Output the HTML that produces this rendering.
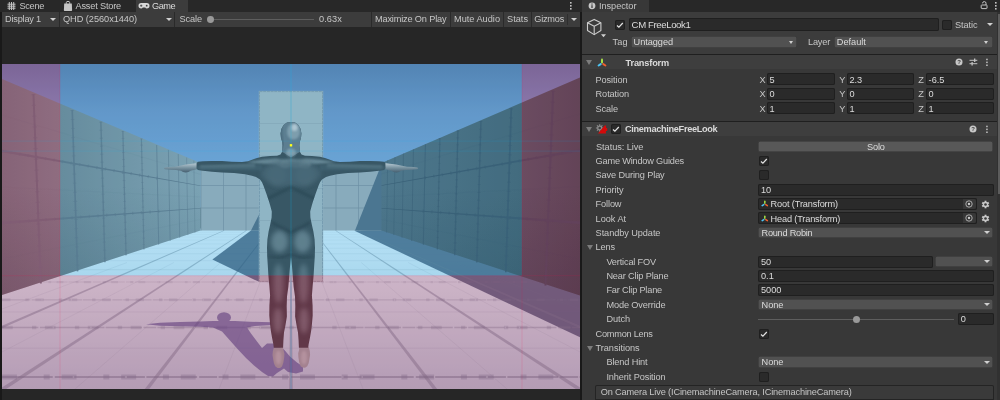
<!DOCTYPE html>
<html><head><meta charset="utf-8"><title>Unity</title>
<style>
html,body{margin:0;padding:0;}
body{width:1000px;height:400px;position:relative;overflow:hidden;background:#383838;font-family:"Liberation Sans",sans-serif;font-size:9.2px;color:#c6c6c6;}
#root{position:absolute;left:0;top:0;width:1000px;height:400px;will-change:transform;}
.a{position:absolute;}
.t{position:absolute;white-space:nowrap;line-height:12px;height:12px;}
.b{font-weight:bold;color:#dadada;}
.w{color:#dcdcdc;}
.f{position:absolute;background:#2a2a2a;border-radius:2px;box-shadow:inset 0 0 0 1px #1f1f1f;height:12px;}
.dd{position:absolute;background:#515151;border-radius:2px;height:11.5px;box-shadow:inset 0 0 0 0.5px #303030;}
.tri{position:absolute;width:0;height:0;border-left:3px solid transparent;border-right:3px solid transparent;border-top:3.5px solid #d0d0d0;}
.fold{position:absolute;width:0;height:0;border-left:3.2px solid transparent;border-right:3.2px solid transparent;border-top:5.4px solid #7c7c7c;}
.sep{position:absolute;top:12px;width:1px;height:15px;background:#2a2a2a;}
.cb{position:absolute;width:10px;height:10px;background:#2a2a2a;border-radius:2px;box-shadow:inset 0 0 0 1px #1f1f1f;}
.hl{position:absolute;left:582px;width:418px;height:1px;background:#1f1f1f;}
</style></head><body>
<div id="root">
<div class="a" style="left:0;top:0;width:582px;height:400px;background:#262626;"></div>
<div class="a" style="left:0;top:0;width:2px;height:400px;background:#191919;"></div>
<div class="a" style="left:580px;top:0;width:2px;height:400px;background:#191919;"></div>
<div class="a" style="left:0;top:0;width:582px;height:12px;background:#282828;"></div>
<div class="a" style="left:136px;top:0;width:52px;height:12px;background:#3c3c3c;"></div>
<div class="a" style="left:2px;top:12px;width:578px;height:14.5px;background:#3c3c3c;"></div>
<div class="a" style="left:582px;top:0;width:418px;height:12px;background:#282828;"></div>
<div class="a" style="left:582px;top:0;width:67px;height:12px;background:#383838;"></div>
<!--GAME-->
<svg class="a" style="left:2px;top:63.500px" width="578" height="325.500" viewBox="2 63.500 578 325.500">
<defs>
<linearGradient id="sky" x1="0" y1="0" x2="0" y2="1"><stop offset="0" stop-color="#6379a6"/><stop offset="0.450" stop-color="#7590bf"/><stop offset="1" stop-color="#7f9fce"/></linearGradient>
<clipPath id="cl"><rect x="2" y="63.500" width="578" height="325.500"/></clipPath>
<filter id="bl1" x="-20%" y="-20%" width="140%" height="140%"><feGaussianBlur stdDeviation="1.200"/></filter>
<filter id="bl2" x="-20%" y="-20%" width="140%" height="140%"><feGaussianBlur stdDeviation="2.500"/></filter>
<filter id="bl0" x="-20%" y="-20%" width="140%" height="140%"><feGaussianBlur stdDeviation="0.600"/></filter>
<linearGradient id="flr" gradientUnits="userSpaceOnUse" x1="0" y1="230" x2="0" y2="389"><stop offset="0" stop-color="#d6e6f3"/><stop offset="0.190" stop-color="#d1e1ef"/><stop offset="0.282" stop-color="#c9dceb"/><stop offset="0.286" stop-color="#c4d8e0"/><stop offset="1" stop-color="#a6bac9"/></linearGradient>
<linearGradient id="lwg" gradientUnits="userSpaceOnUse" x1="2" y1="0" x2="200" y2="0"><stop offset="0" stop-color="#6f7780"/><stop offset="0.320" stop-color="#7b838c"/><stop offset="1" stop-color="#939da6"/></linearGradient>
<linearGradient id="rwg" gradientUnits="userSpaceOnUse" x1="580" y1="0" x2="382" y2="0"><stop offset="0" stop-color="#46515a"/><stop offset="0.320" stop-color="#505c67"/><stop offset="1" stop-color="#5d6a77"/></linearGradient>
<linearGradient id="wdk" gradientUnits="userSpaceOnUse" x1="0" y1="185" x2="0" y2="295"><stop offset="0" stop-color="#0a1420" stop-opacity="0"/><stop offset="1" stop-color="#0a1420" stop-opacity="0.160"/></linearGradient>
</defs>
<g clip-path="url(#cl)">
<rect x="2" y="63.500" width="578" height="104" fill="url(#sky)"/>
<rect x="2" y="167" width="578" height="40" fill="#7f9fce"/>
<rect x="2" y="228" width="578" height="162" fill="url(#flr)"/>
<polygon points="354,230 381,229 382,229 580,293.500 580,336.800" fill="#314664" fill-opacity="0.730"/>
<line x1="2" x2="580" y1="376.50" y2="376.50" stroke="#687a8e" stroke-width="2.24" stroke-opacity="0.50" stroke-dasharray="50.7 2.1 17.9 1.5"/>
<line x1="2" x2="580" y1="376.50" y2="376.50" stroke="#687a8e" stroke-width="5.07" stroke-opacity="0.35" stroke-dasharray="14.9 26.8 6.0 11.9"/>
<line x1="2" x2="580" y1="419.41" y2="419.41" stroke="#687a8e" stroke-width="0.600" stroke-opacity="0.200"/>
<line x1="2" x2="580" y1="327.00" y2="327.00" stroke="#687a8e" stroke-width="1.61" stroke-opacity="0.36" stroke-dasharray="36.4 1.5 12.8 1.1"/>
<line x1="2" x2="580" y1="327.00" y2="327.00" stroke="#687a8e" stroke-width="3.64" stroke-opacity="0.25" stroke-dasharray="10.7 19.3 4.3 8.6"/>
<line x1="2" x2="580" y1="347.68" y2="347.68" stroke="#687a8e" stroke-width="0.600" stroke-opacity="0.200"/>
<line x1="2" x2="580" y1="299.28" y2="299.28" stroke="#687a8e" stroke-width="1.25" stroke-opacity="0.25" stroke-dasharray="28.4 1.2 10.0 0.8"/>
<line x1="2" x2="580" y1="299.28" y2="299.28" stroke="#687a8e" stroke-width="2.84" stroke-opacity="0.18" stroke-dasharray="8.4 15.0 3.3 6.7"/>
<line x1="2" x2="580" y1="311.42" y2="311.42" stroke="#687a8e" stroke-width="0.600" stroke-opacity="0.200"/>
<line x1="2" x2="580" y1="281.55" y2="281.55" stroke="#687a8e" stroke-width="1.03" stroke-opacity="0.19" stroke-dasharray="23.3 1.0 8.2 0.7"/>
<line x1="2" x2="580" y1="281.55" y2="281.55" stroke="#687a8e" stroke-width="2.33" stroke-opacity="0.14" stroke-dasharray="6.8 12.3 2.7 5.5"/>
<line x1="2" x2="580" y1="269.25" y2="269.25" stroke="#687a8e" stroke-width="0.87" stroke-opacity="0.16"/>
<line x1="2" x2="580" y1="260.20" y2="260.20" stroke="#687a8e" stroke-width="0.75" stroke-opacity="0.14"/>
<line x1="2" x2="580" y1="253.27" y2="253.27" stroke="#687a8e" stroke-width="0.67" stroke-opacity="0.13"/>
<line x1="2" x2="580" y1="247.80" y2="247.80" stroke="#687a8e" stroke-width="0.60" stroke-opacity="0.12"/>
<line x1="2" x2="580" y1="243.36" y2="243.36" stroke="#687a8e" stroke-width="0.54" stroke-opacity="0.11"/>
<line x1="2" x2="580" y1="239.69" y2="239.69" stroke="#687a8e" stroke-width="0.49" stroke-opacity="0.11"/>
<line x1="2" x2="580" y1="236.61" y2="236.61" stroke="#687a8e" stroke-width="0.45" stroke-opacity="0.10"/>
<line x1="2" x2="580" y1="233.98" y2="233.98" stroke="#687a8e" stroke-width="0.42" stroke-opacity="0.10"/>
<line x1="2" x2="580" y1="231.71" y2="231.71" stroke="#687a8e" stroke-width="0.39" stroke-opacity="0.10"/>
<line x1="2" x2="580" y1="229.73" y2="229.73" stroke="#687a8e" stroke-width="0.37" stroke-opacity="0.09"/>
<polygon points="223.56,230.00 224.81,230.00 -144.54,392.00 -153.58,392.00" fill="#687a8e" fill-opacity="0.460"/>
<polygon points="246.00,230.00 246.91,230.00 0.92,392.00 -5.68,392.00" fill="#687a8e" fill-opacity="0.460"/>
<polygon points="268.41,230.00 269.04,230.00 146.58,392.00 142.04,392.00" fill="#687a8e" fill-opacity="0.460"/>
<polygon points="290.75,230.00 291.25,230.00 292.80,392.00 289.20,392.00" fill="#687a8e" fill-opacity="0.460"/>
<polygon points="312.96,230.00 313.59,230.00 439.96,392.00 435.42,392.00" fill="#687a8e" fill-opacity="0.460"/>
<polygon points="335.09,230.00 336.00,230.00 587.68,392.00 581.08,392.00" fill="#687a8e" fill-opacity="0.460"/>
<polygon points="357.19,230.00 358.44,230.00 735.58,392.00 726.54,392.00" fill="#687a8e" fill-opacity="0.460"/>
<line x1="127.03" y1="262" x2="-222.41" y2="392" stroke="#687a8e" stroke-width="0.600" stroke-opacity="0.180"/>
<line x1="173.88" y1="262" x2="-75.72" y2="392" stroke="#687a8e" stroke-width="0.600" stroke-opacity="0.180"/>
<line x1="220.73" y1="262" x2="70.97" y2="392" stroke="#687a8e" stroke-width="0.600" stroke-opacity="0.180"/>
<line x1="267.58" y1="262" x2="217.66" y2="392" stroke="#687a8e" stroke-width="0.600" stroke-opacity="0.180"/>
<line x1="314.42" y1="262" x2="364.34" y2="392" stroke="#687a8e" stroke-width="0.600" stroke-opacity="0.180"/>
<line x1="361.27" y1="262" x2="511.03" y2="392" stroke="#687a8e" stroke-width="0.600" stroke-opacity="0.180"/>
<line x1="408.12" y1="262" x2="657.72" y2="392" stroke="#687a8e" stroke-width="0.600" stroke-opacity="0.180"/>
<line x1="454.97" y1="262" x2="804.41" y2="392" stroke="#687a8e" stroke-width="0.600" stroke-opacity="0.180"/>
<rect x="200.500" y="162.500" width="181" height="67.500" fill="#a3a7b0"/>
<line x1="201.00" x2="201.00" y1="162.500" y2="230" stroke="#838894" stroke-width="0.700"/>
<line x1="223.50" x2="223.50" y1="162.500" y2="230" stroke="#838894" stroke-width="0.700"/>
<line x1="246.00" x2="246.00" y1="162.500" y2="230" stroke="#838894" stroke-width="0.700"/>
<line x1="268.50" x2="268.50" y1="162.500" y2="230" stroke="#838894" stroke-width="0.700"/>
<line x1="291.00" x2="291.00" y1="162.500" y2="230" stroke="#838894" stroke-width="0.700"/>
<line x1="313.50" x2="313.50" y1="162.500" y2="230" stroke="#838894" stroke-width="0.700"/>
<line x1="336.00" x2="336.00" y1="162.500" y2="230" stroke="#838894" stroke-width="0.700"/>
<line x1="358.50" x2="358.50" y1="162.500" y2="230" stroke="#838894" stroke-width="0.700"/>
<line x1="381.00" x2="381.00" y1="162.500" y2="230" stroke="#838894" stroke-width="0.700"/>
<line x1="200.500" x2="381.500" y1="185.00" y2="185.00" stroke="#838894" stroke-width="0.700"/>
<line x1="200.500" x2="381.500" y1="207.50" y2="207.50" stroke="#838894" stroke-width="0.700"/>
<polygon points="382,162.500 382,230 355,230" fill="#5a687c"/>
<polygon points="2,78.500 200.500,162.500 200.500,230 2,294.500" fill="url(#lwg)"/>
<polygon points="580,77 381.500,162.500 381.500,230 580,295" fill="url(#rwg)"/>
<polygon points="2,185 200.500,185 200.500,230 2,294.500" fill="url(#wdk)"/>
<polygon points="580,185 381.500,185 381.500,230 580,295" fill="url(#wdk)"/>
<line x1="-22.04" x2="-11.19" y1="70.80" y2="300.38" stroke="#696f7d" stroke-width="2.34" stroke-opacity="1.00"/>
<line x1="-22.04" x2="-11.19" y1="70.80" y2="300.38" stroke="#696f7d" stroke-width="5.14" stroke-opacity="0.550" stroke-dasharray="1.3 11.7"/>
<line x1="33.44" x2="40.84" y1="93.51" y2="283.05" stroke="#696f7d" stroke-width="1.93" stroke-opacity="1.00"/>
<line x1="33.44" x2="40.84" y1="93.51" y2="283.05" stroke="#696f7d" stroke-width="4.25" stroke-opacity="0.550" stroke-dasharray="1.1 9.7"/>
<line x1="72.22" x2="77.58" y1="109.47" y2="270.86" stroke="#696f7d" stroke-width="1.64" stroke-opacity="0.90"/>
<line x1="72.22" x2="77.58" y1="109.47" y2="270.86" stroke="#696f7d" stroke-width="3.62" stroke-opacity="0.550" stroke-dasharray="0.9 8.2"/>
<line x1="100.85" x2="104.91" y1="121.30" y2="261.83" stroke="#696f7d" stroke-width="1.43" stroke-opacity="0.82"/>
<line x1="100.85" x2="104.91" y1="121.30" y2="261.83" stroke="#696f7d" stroke-width="3.15" stroke-opacity="0.550" stroke-dasharray="0.8 7.2"/>
<line x1="122.85" x2="126.04" y1="130.43" y2="254.86" stroke="#696f7d" stroke-width="1.27" stroke-opacity="0.76"/>
<line x1="122.85" x2="126.04" y1="130.43" y2="254.86" stroke="#696f7d" stroke-width="2.79" stroke-opacity="0.550" stroke-dasharray="0.7 6.3"/>
<line x1="141.40" x2="143.93" y1="138.14" y2="248.98" stroke="#696f7d" stroke-width="1.13" stroke-opacity="0.71"/>
<line x1="141.40" x2="143.93" y1="138.14" y2="248.98" stroke="#696f7d" stroke-width="2.48" stroke-opacity="0.550" stroke-dasharray="0.6 5.6"/>
<line x1="156.67" x2="158.71" y1="144.50" y2="244.13" stroke="#696f7d" stroke-width="1.01" stroke-opacity="0.67"/>
<line x1="168.40" x2="170.10" y1="149.39" y2="240.39" stroke="#696f7d" stroke-width="0.93" stroke-opacity="0.64"/>
<line x1="178.25" x2="179.69" y1="153.51" y2="237.25" stroke="#696f7d" stroke-width="0.85" stroke-opacity="0.61"/>
<line x1="186.63" x2="187.87" y1="157.02" y2="234.57" stroke="#696f7d" stroke-width="0.79" stroke-opacity="0.59"/>
<line x1="193.85" x2="194.93" y1="160.04" y2="232.26" stroke="#696f7d" stroke-width="0.74" stroke-opacity="0.57"/>
<polygon points="2.00,149.25 2.00,151.75 200.50,185.49 200.50,184.89" fill="#696f7d"/>
<line x1="2.00" y1="150.50" x2="160.95" y2="178.28" stroke="#696f7d" stroke-width="3.200" stroke-opacity="0.500" stroke-dasharray="1.200 7.500"/>
<polygon points="2.00,221.25 2.00,223.75 200.50,208.03 200.50,207.43" fill="#696f7d"/>
<line x1="2.00" y1="222.50" x2="160.95" y2="210.68" stroke="#696f7d" stroke-width="3.200" stroke-opacity="0.500" stroke-dasharray="1.200 7.500"/>
<line x1="2.00" y1="114.50" x2="200.50" y2="173.91" stroke="#696f7d" stroke-width="0.500" stroke-opacity="0.180"/>
<line x1="2.00" y1="186.50" x2="200.50" y2="196.46" stroke="#696f7d" stroke-width="0.500" stroke-opacity="0.180"/>
<line x1="2.00" y1="258.50" x2="200.50" y2="219.01" stroke="#696f7d" stroke-width="0.500" stroke-opacity="0.180"/>
<line x1="614.70" x2="603.01" y1="64.84" y2="304.22" stroke="#454f5f" stroke-width="2.42" stroke-opacity="1.00"/>
<line x1="614.70" x2="603.01" y1="64.84" y2="304.22" stroke="#454f5f" stroke-width="5.31" stroke-opacity="0.550" stroke-dasharray="1.3 12.1"/>
<line x1="553.16" x2="545.43" y1="90.30" y2="284.92" stroke="#454f5f" stroke-width="1.96" stroke-opacity="1.00"/>
<line x1="553.16" x2="545.43" y1="90.30" y2="284.92" stroke="#454f5f" stroke-width="4.32" stroke-opacity="0.550" stroke-dasharray="1.1 9.8"/>
<line x1="511.27" x2="505.79" y1="107.74" y2="271.70" stroke="#454f5f" stroke-width="1.65" stroke-opacity="0.90"/>
<line x1="511.27" x2="505.79" y1="107.74" y2="271.70" stroke="#454f5f" stroke-width="3.64" stroke-opacity="0.550" stroke-dasharray="0.9 8.3"/>
<line x1="480.93" x2="476.84" y1="120.43" y2="262.07" stroke="#454f5f" stroke-width="1.43" stroke-opacity="0.82"/>
<line x1="480.93" x2="476.84" y1="120.43" y2="262.07" stroke="#454f5f" stroke-width="3.14" stroke-opacity="0.550" stroke-dasharray="0.8 7.1"/>
<line x1="457.93" x2="454.76" y1="130.08" y2="254.76" stroke="#454f5f" stroke-width="1.26" stroke-opacity="0.76"/>
<line x1="457.93" x2="454.76" y1="130.08" y2="254.76" stroke="#454f5f" stroke-width="2.77" stroke-opacity="0.550" stroke-dasharray="0.7 6.3"/>
<line x1="439.90" x2="437.37" y1="137.67" y2="249.01" stroke="#454f5f" stroke-width="1.12" stroke-opacity="0.71"/>
<line x1="439.90" x2="437.37" y1="137.67" y2="249.01" stroke="#454f5f" stroke-width="2.47" stroke-opacity="0.550" stroke-dasharray="0.6 5.6"/>
<line x1="425.38" x2="423.32" y1="143.79" y2="244.37" stroke="#454f5f" stroke-width="1.01" stroke-opacity="0.67"/>
<line x1="413.45" x2="411.73" y1="148.83" y2="240.55" stroke="#454f5f" stroke-width="0.93" stroke-opacity="0.64"/>
<line x1="403.46" x2="402.01" y1="153.06" y2="237.34" stroke="#454f5f" stroke-width="0.85" stroke-opacity="0.61"/>
<line x1="394.98" x2="393.74" y1="156.65" y2="234.62" stroke="#454f5f" stroke-width="0.79" stroke-opacity="0.59"/>
<line x1="387.68" x2="386.61" y1="159.74" y2="232.28" stroke="#454f5f" stroke-width="0.73" stroke-opacity="0.57"/>
<polygon points="580.00,148.42 580.00,150.92 381.50,185.23 381.50,184.63" fill="#454f5f"/>
<line x1="580.00" y1="149.67" x2="421.05" y2="177.90" stroke="#454f5f" stroke-width="3.200" stroke-opacity="0.500" stroke-dasharray="1.200 7.500"/>
<polygon points="580.00,221.08 580.00,223.58 381.50,207.98 381.50,207.38" fill="#454f5f"/>
<line x1="580.00" y1="222.33" x2="421.05" y2="210.60" stroke="#454f5f" stroke-width="3.200" stroke-opacity="0.500" stroke-dasharray="1.200 7.500"/>
<line x1="580.00" y1="113.33" x2="381.50" y2="173.55" stroke="#454f5f" stroke-width="0.500" stroke-opacity="0.180"/>
<line x1="580.00" y1="186.00" x2="381.50" y2="196.30" stroke="#454f5f" stroke-width="0.500" stroke-opacity="0.180"/>
<line x1="580.00" y1="258.67" x2="381.50" y2="219.06" stroke="#454f5f" stroke-width="0.500" stroke-opacity="0.180"/>
<polygon points="259.600,230 251,230 212.400,259 259.600,281.600" fill="#314664" fill-opacity="0.730"/>
<polygon points="259.600,230 259.600,213 251,230" fill="#5a687c"/>
<rect x="258.800" y="90.400" width="64.400" height="191.200" fill="#abb3ba"/>
<rect x="259.500" y="91.100" width="63" height="189.800" fill="none" stroke="#858e9c" stroke-width="0.800" stroke-dasharray="3 0.700"/>
<line x1="259" x2="323.300" y1="123" y2="123" stroke="#858e9c" stroke-width="0.500" stroke-opacity="0.600"/>
<line x1="259" x2="323.300" y1="155.5" y2="155.5" stroke="#858e9c" stroke-width="0.500" stroke-opacity="0.600"/>
<line x1="259" x2="323.300" y1="188" y2="188" stroke="#858e9c" stroke-width="0.500" stroke-opacity="0.600"/>
<line x1="259" x2="323.300" y1="220" y2="220" stroke="#858e9c" stroke-width="0.500" stroke-opacity="0.600"/>
<line x1="259" x2="323.300" y1="252" y2="252" stroke="#858e9c" stroke-width="0.500" stroke-opacity="0.600"/>
<line x1="291" x2="291" y1="90.500" y2="281" stroke="#858e9c" stroke-width="0.500" stroke-opacity="0.600"/>
<g fill="#48508a" filter="url(#bl0)" opacity="0.640">
<ellipse cx="224" cy="317" rx="7" ry="5.200"/>
<path d="M146 323.800 L160 322.200 L180 321.400 L200 320.900 L213 320.500 L235 320.600 L250 321.300 L272 321.800 L272 324.600 L255 325.500 L247 327 L251 333 L257 341 L262 347.500 L267 343 L274 343 L284 349 L290 356 L297 362 L303 366 L303 371 L296 373 L288 371.500 L284 368 L277 372.500 L273 376 L268 375.500 L262 371.500 L254 365 L246 357.500 L238 349 L230 340 L222 331 L213 327 L200 326.300 L180 325.800 L160 325.200Z"/>
</g>
<g id="char">
<linearGradient id="hg" gradientUnits="userSpaceOnUse" x1="0" y1="163.500" x2="0" y2="172"><stop offset="0" stop-color="#cdc0c0"/><stop offset="0.450" stop-color="#8f898e"/><stop offset="1" stop-color="#534d55"/></linearGradient>
<path d="M198.0 162.4 L197.0 162.6 L192.0 163.2 L186.0 164.0 L180.0 165.2 L175.0 166.2 L168.0 166.4 L164.6 166.9 L163.8 167.8 L164.8 168.8 L170.0 169.2 L176.0 169.4 L181.0 170.2 L183.0 171.4 L185.5 172.0 L188.5 171.6 L190.5 170.2 L197.0 168.8 L198.0 168.5Z" fill="url(#hg)"/>
<path d="M384.0 162.4 L385.0 162.6 L390.0 163.2 L396.0 164.0 L402.0 165.2 L407.0 166.2 L414.0 166.4 L417.4 166.9 L418.2 167.8 L417.2 168.8 L412.0 169.2 L406.0 169.4 L401.0 170.2 L399.0 171.4 L396.5 172.0 L393.5 171.6 L391.5 170.2 L385.0 168.8 L384.0 168.5Z" fill="url(#hg)"/>
<path d="M273.8 347.0 L272.8 351.0 L272.5 354.5 L273.2 359.0 L274.0 363.0 L275.4 366.0 L277.6 367.5 L280.0 367.4 L282.0 366.0 L283.4 362.0 L284.2 357.0 L284.4 353.0 L283.6 350.0 L283.1 347.0Z" fill="#929a9c"/>
<ellipse cx="278.5" cy="357" rx="3" ry="7" fill="#a6adae" filter="url(#bl1)"/>
<path d="M308.8 346.7 L309.8 350.7 L310.1 354.2 L309.4 358.7 L308.6 362.7 L307.2 365.7 L305.0 367.2 L302.6 367.1 L300.6 365.7 L299.2 361.7 L298.4 356.7 L298.2 352.7 L299.0 349.7 L299.5 346.7Z" fill="#929a9c"/>
<ellipse cx="304" cy="357" rx="3" ry="7" fill="#a6adae" filter="url(#bl1)"/>
<path d="M291.0 121.4 L287.0 122.0 L283.6 124.5 L281.4 128.5 L280.6 133.0 L281.0 137.5 L282.3 141.5 L282.6 145.0 L282.2 148.5 L282.0 151.5 L280.5 154.0 L277.0 155.2 L270.0 155.5 L262.0 156.2 L257.0 157.5 L252.0 159.3 L248.0 160.8 L242.0 161.5 L232.0 161.2 L222.0 160.4 L212.0 160.4 L203.0 160.8 L198.0 161.3 L196.6 162.5 L196.6 168.0 L198.0 169.4 L203.0 170.2 L212.0 171.2 L222.0 172.0 L234.0 172.5 L245.0 173.8 L252.0 175.3 L256.0 176.4 L260.0 179.0 L262.0 181.8 L263.4 185.0 L266.3 193.0 L268.4 199.0 L270.2 205.0 L271.8 211.0 L271.6 217.0 L270.2 224.0 L268.6 231.0 L267.4 239.0 L267.0 247.0 L267.2 256.0 L267.8 265.0 L268.4 275.0 L269.3 285.0 L270.1 295.0 L269.4 305.0 L269.3 315.0 L270.2 325.0 L270.8 330.0 L272.0 337.0 L273.4 344.0 L273.8 347.2 L283.1 347.2 L283.4 340.0 L284.0 332.0 L285.4 325.0 L286.9 316.0 L286.7 306.0 L287.0 296.0 L288.4 286.0 L289.2 276.0 L290.0 266.0 L291.0 256.5 L291.0 256.5 L292.0 266.0 L292.8 276.0 L293.6 286.0 L295.0 296.0 L295.3 306.0 L295.1 316.0 L296.6 325.0 L298.0 332.0 L298.6 340.0 L298.9 347.2 L308.2 347.2 L308.6 344.0 L310.0 337.0 L311.2 330.0 L311.8 325.0 L312.7 315.0 L312.6 305.0 L311.9 295.0 L312.7 285.0 L313.6 275.0 L314.2 265.0 L314.8 256.0 L315.0 247.0 L314.6 239.0 L313.4 231.0 L311.8 224.0 L310.4 217.0 L310.2 211.0 L311.8 205.0 L313.6 199.0 L315.7 193.0 L318.6 185.0 L320.0 181.8 L322.0 179.0 L326.0 176.4 L330.0 175.3 L337.0 173.8 L348.0 172.5 L360.0 172.0 L370.0 171.2 L379.0 170.2 L384.0 169.4 L385.4 168.0 L385.4 162.5 L384.0 161.3 L379.0 160.8 L370.0 160.4 L360.0 160.4 L350.0 161.2 L340.0 161.5 L334.0 160.8 L330.0 159.3 L325.0 157.5 L320.0 156.2 L312.0 155.5 L305.0 155.2 L301.5 154.0 L300.0 151.5 L299.8 148.5 L299.4 145.0 L299.7 141.5 L301.0 137.5 L301.4 133.0 L300.6 128.5 L298.4 124.5 L295.0 122.0 L291.0 121.4Z" fill="#434348"/>
<clipPath id="cc"><path d="M291.0 121.4 L287.0 122.0 L283.6 124.5 L281.4 128.5 L280.6 133.0 L281.0 137.5 L282.3 141.5 L282.6 145.0 L282.2 148.5 L282.0 151.5 L280.5 154.0 L277.0 155.2 L270.0 155.5 L262.0 156.2 L257.0 157.5 L252.0 159.3 L248.0 160.8 L242.0 161.5 L232.0 161.2 L222.0 160.4 L212.0 160.4 L203.0 160.8 L198.0 161.3 L196.6 162.5 L196.6 168.0 L198.0 169.4 L203.0 170.2 L212.0 171.2 L222.0 172.0 L234.0 172.5 L245.0 173.8 L252.0 175.3 L256.0 176.4 L260.0 179.0 L262.0 181.8 L263.4 185.0 L266.3 193.0 L268.4 199.0 L270.2 205.0 L271.8 211.0 L271.6 217.0 L270.2 224.0 L268.6 231.0 L267.4 239.0 L267.0 247.0 L267.2 256.0 L267.8 265.0 L268.4 275.0 L269.3 285.0 L270.1 295.0 L269.4 305.0 L269.3 315.0 L270.2 325.0 L270.8 330.0 L272.0 337.0 L273.4 344.0 L273.8 347.2 L283.1 347.2 L283.4 340.0 L284.0 332.0 L285.4 325.0 L286.9 316.0 L286.7 306.0 L287.0 296.0 L288.4 286.0 L289.2 276.0 L290.0 266.0 L291.0 256.5 L291.0 256.5 L292.0 266.0 L292.8 276.0 L293.6 286.0 L295.0 296.0 L295.3 306.0 L295.1 316.0 L296.6 325.0 L298.0 332.0 L298.6 340.0 L298.9 347.2 L308.2 347.2 L308.6 344.0 L310.0 337.0 L311.2 330.0 L311.8 325.0 L312.7 315.0 L312.6 305.0 L311.9 295.0 L312.7 285.0 L313.6 275.0 L314.2 265.0 L314.8 256.0 L315.0 247.0 L314.6 239.0 L313.4 231.0 L311.8 224.0 L310.4 217.0 L310.2 211.0 L311.8 205.0 L313.6 199.0 L315.7 193.0 L318.6 185.0 L320.0 181.8 L322.0 179.0 L326.0 176.4 L330.0 175.3 L337.0 173.8 L348.0 172.5 L360.0 172.0 L370.0 171.2 L379.0 170.2 L384.0 169.4 L385.4 168.0 L385.4 162.5 L384.0 161.3 L379.0 160.8 L370.0 160.4 L360.0 160.4 L350.0 161.2 L340.0 161.5 L334.0 160.8 L330.0 159.3 L325.0 157.5 L320.0 156.2 L312.0 155.5 L305.0 155.2 L301.5 154.0 L300.0 151.5 L299.8 148.5 L299.4 145.0 L299.7 141.5 L301.0 137.5 L301.4 133.0 L300.6 128.5 L298.4 124.5 L295.0 122.0 L291.0 121.4Z"/></clipPath>
<g clip-path="url(#cc)">
<path d="M291 120 L279 120 L279 150 Q284 152 291 157 Q298 152 303 150 L303 120Z" fill="#6e727c"/>
<ellipse cx="293.500" cy="131" rx="6.500" ry="8" fill="#989aa1" filter="url(#bl1)" opacity="0.950"/>
<ellipse cx="294.500" cy="127" rx="3" ry="3.500" fill="#d2cacc" filter="url(#bl1)" opacity="0.950"/>
<path d="M281 124 Q279.500 134 283 146" stroke="#4f505a" stroke-width="2.400" fill="none" filter="url(#bl1)" opacity="0.800"/>
<ellipse cx="291" cy="152" rx="5" ry="4" fill="#9d9da3" filter="url(#bl1)" opacity="0.900"/>
<path d="M246 162 Q262 158.500 276 158 Q284 160 291 158 Q298 160 306 158 Q320 158.500 336 162 Q320 163.500 306 164 Q298 170 291 166 Q284 170 276 164 Q262 163.500 246 162Z" fill="#85898e" filter="url(#bl1)" opacity="0.850"/>
<path d="M200 165 L255 163.500 L255 167 L200 168Z" fill="#85898e" filter="url(#bl1)" opacity="0.600"/>
<path d="M382 165 L327 163.500 L327 167 L382 168Z" fill="#85898e" filter="url(#bl1)" opacity="0.600"/>
<ellipse cx="277" cy="175" rx="9" ry="10" fill="#85898e" filter="url(#bl2)" opacity="0.320"/>
<ellipse cx="305" cy="175" rx="9" ry="10" fill="#85898e" filter="url(#bl2)" opacity="0.320"/>
<ellipse cx="285" cy="164" rx="5" ry="3.500" fill="#989a9c" filter="url(#bl1)" opacity="0.800"/>
<ellipse cx="305" cy="164.500" rx="6" ry="3.500" fill="#919297" filter="url(#bl1)" opacity="0.700"/>
<ellipse cx="291" cy="173" rx="30" ry="13" fill="#56595f" filter="url(#bl2)" opacity="0.800"/>
<path d="M196 166 L262 164 L262 170 L196 169Z" fill="#53575d" filter="url(#bl1)" opacity="0.600"/>
<path d="M386 166 L320 164 L320 170 L386 169Z" fill="#53575d" filter="url(#bl1)" opacity="0.600"/>
<ellipse cx="279.500" cy="241" rx="8.500" ry="11" fill="#85898e" filter="url(#bl2)" opacity="0.700"/>
<ellipse cx="302.500" cy="241" rx="8.500" ry="11" fill="#85898e" filter="url(#bl2)" opacity="0.700"/>
<ellipse cx="278.500" cy="283" rx="5" ry="20" fill="#85898e" filter="url(#bl2)" opacity="0.550"/>
<ellipse cx="303.500" cy="283" rx="5" ry="20" fill="#85898e" filter="url(#bl2)" opacity="0.550"/>
<ellipse cx="278" cy="320" rx="4.500" ry="13" fill="#85898e" filter="url(#bl2)" opacity="0.600"/>
<ellipse cx="304" cy="320" rx="4.500" ry="13" fill="#85898e" filter="url(#bl2)" opacity="0.600"/>
<path d="M266 199 L291 186.500 L316 199 M272 222 L291 232 L310 222" stroke="#322e33" stroke-width="2.600" fill="none" filter="url(#bl1)" opacity="0.600"/>
<path d="M291 158 V230" stroke="#322e33" stroke-width="1.200" filter="url(#bl0)" opacity="0.500"/>
<path d="M269 256 Q280 259 291 254 Q302 259 313 256" stroke="#322e33" stroke-width="1.800" fill="none" filter="url(#bl1)" opacity="0.700"/>
</g>
</g>
</g>
<rect x="60" y="63.500" width="462" height="211.700" fill="rgb(0,194,255)" fill-opacity="0.16"/>
<rect x="2" y="63.500" width="58" height="325.500" fill="rgb(255,0,72)" fill-opacity="0.16"/>
<rect x="522" y="63.500" width="58" height="325.500" fill="rgb(255,0,72)" fill-opacity="0.16"/>
<rect x="60" y="275.200" width="462" height="113.800" fill="rgb(255,0,72)" fill-opacity="0.16"/>
<g stroke-width="0.800" fill="none">
<path d="M60 63.500V389M522 63.500V389M2 275.200H580" stroke="rgb(255,0,72)" stroke-opacity="0.160"/>
<path d="M2 140.600H580M2 150.600H580" stroke="rgb(0,194,255)" stroke-opacity="0.160"/><path d="M291 63.500V389" stroke="rgb(0,194,255)" stroke-opacity="0.300"/>
</g>
<rect x="289.800" y="143.600" width="2.400" height="2.400" fill="#fffe19"/>
</svg>
<svg class="a" style="left:7px;top:1px" width="10" height="10" viewBox="0 0 10 10"><g stroke="#c4c4c4" stroke-width="1" fill="none"><path d="M0.5 3.2H8.5M0.5 5.2H8.5M0.5 7.2H8.5M2.3 1V9M4.5 1V9M6.7 1V9"/></g></svg>
<svg class="a" style="left:63px;top:0px" width="10" height="12" viewBox="0 0 10 12"><path d="M1.2 3.6h7.6l0.3 6.6q0 .7-.7.7H1.6q-.7 0-.7-.7z" fill="#c4c4c4"/><path d="M3.3 3.8V2.6q0-1.2 1.7-1.2t1.7 1.2v1.2" stroke="#c4c4c4" stroke-width="1" fill="none"/></svg>
<svg class="a" style="left:138px;top:2px" width="12" height="8" viewBox="0 0 12 8"><path d="M3.2 1h5.6a2.7 2.7 0 0 1 0 5.4q-1 0-1.6-.9H4.8q-.6.9-1.6.9a2.7 2.7 0 0 1 0-5.4z" fill="#d8d8d8"/><circle cx="8.7" cy="3.7" r="0.9" fill="#3c3c3c"/><path d="M2.1 3.700h2.200M3.200 2.600v2.200" stroke="#3c3c3c" stroke-width="0.8"/></svg>
<svg class="a" style="left:569px;top:1px" width="4" height="10" viewBox="0 0 4 10"><g fill="#c4c4c4"><rect x="1" y="1" width="1.6" height="1.6"/><rect x="1" y="4" width="1.6" height="1.6"/><rect x="1" y="7" width="1.6" height="1.6"/></g></svg>
<div class="tri" style="left:50px;top:18px"></div>
<div class="sep" style="left:59px"></div>
<div class="tri" style="left:166px;top:18px"></div>
<div class="sep" style="left:174px"></div>
<div class="a" style="left:207px;top:19px;width:107px;height:1px;background:#5e5e5e"></div>
<div class="a" style="left:207px;top:16.3px;width:6.8px;height:6.8px;border-radius:50%;background:#999"></div>
<div class="sep" style="left:371px"></div>
<div class="sep" style="left:450px"></div>
<div class="sep" style="left:503px"></div>
<div class="sep" style="left:531px"></div>
<div class="a" style="left:567px;top:14px;width:1px;height:11px;background:#2e2e2e"></div>
<div class="tri" style="left:571px;top:18px"></div>
<svg class="a" style="left:587.5px;top:2px" width="8" height="8" viewBox="0 0 8 8"><circle cx="4" cy="3.8" r="3.4" fill="#c8c8c8"/><rect x="3.400" y="3.200" width="1.200" height="2.800" fill="#383838"/><rect x="3.400" y="1.500" width="1.200" height="1.100" fill="#383838"/></svg>
<svg class="a" style="left:980px;top:0px" width="9" height="10" viewBox="0 0 9 10"><rect x="1.200" y="5" width="5.800" height="3.600" rx="0.600" fill="none" stroke="#c4c4c4" stroke-width="1"/><path d="M2.600 3.400V3.200q0-1.600 1.700-1.600t1.700 1.600V5" fill="none" stroke="#c4c4c4" stroke-width="1"/></svg>
<svg class="a" style="left:994px;top:1px" width="4" height="10" viewBox="0 0 4 10"><g fill="#c4c4c4"><rect x="1" y="1" width="1.600" height="1.600"/><rect x="1" y="4" width="1.600" height="1.600"/><rect x="1" y="7" width="1.600" height="1.600"/></g></svg>
<div class="a" style="left:582px;top:12px;width:418px;height:42px;background:#3c3c3c"></div>
<svg class="a" style="left:586px;top:14px" width="21" height="25" viewBox="586 14 21 25"><g fill="none" stroke="#cdcdcd" stroke-width="1.100" stroke-linejoin="round"><path d="M594.200 19.400L600.900 22.800V30.500L594.200 34.600L587.500 30.500V22.800Z"/><path d="M587.500 22.800L594.200 26.300L600.900 22.800M594.200 26.300V34.600"/></g><path d="M601 34.200h5l-2.500 3z" fill="#d0d0d0"/></svg>
<div class="cb" style="left:615px;top:20px"></div>
<svg class="a" style="left:615px;top:20px" width="10" height="10" viewBox="0 0 10 10"><path d="M2 5.500L3.900 7.200L7.800 3" stroke="#e4e4e4" stroke-width="1.200" fill="none"/></svg>
<div class="f" style="left:629.4px;top:18.300px;width:309.500px;height:12.500px"></div>
<div class="cb" style="left:941.5px;top:19.8px"></div>
<div class="tri" style="left:986.800px;top:22.500px"></div>
<div class="dd" style="left:631px;top:36.300px;width:166px"></div>
<div class="tri" style="left:788.500px;top:40.500px;border-width:3.400px 2.800px 0"></div>
<div class="dd" style="left:834px;top:36.300px;width:159px"></div>
<div class="tri" style="left:984px;top:40.500px;border-width:3.400px 2.800px 0"></div>
<div class="hl" style="top:54px"></div>
<div class="a" style="left:582px;top:55px;width:418px;height:14px;background:#3e3e3e"></div>
<div class="fold" style="left:586px;top:59.600px"></div>
<svg class="a" style="left:596.8px;top:57.6px" width="10" height="10" viewBox="0 0 10 10"><g stroke-width="2" stroke-linecap="round" fill="none"><path d="M5 1.600V4.400" stroke="#a6e048"/><path d="M3.700 6.100L1.600 7.500" stroke="#4cc4f4"/><path d="M6.300 6.100L8.400 7.500" stroke="#f0602e"/></g></svg>
<svg class="a" style="left:954.7px;top:57.8px" width="8" height="8" viewBox="0 0 8 8"><circle cx="4" cy="4" r="3.500" fill="#c8c8c8"/><text x="4" y="6.300" font-size="6" font-weight="bold" text-anchor="middle" fill="#3e3e3e" font-family="Liberation Sans, sans-serif">?</text></svg>
<svg class="a" style="left:969px;top:58px" width="9" height="8" viewBox="0 0 9 8"><g stroke="#c4c4c4" stroke-width="1" fill="none"><path d="M0.500 2.300H8.300M0.500 5.700H8.300"/><path d="M5.700 0.600V4M3.100 4V7.400" stroke-width="1.300"/></g></svg>
<svg class="a" style="left:985.3px;top:57.5px" width="4" height="9" viewBox="0 0 4 9"><g fill="#c4c4c4"><rect x="1.200" y="0.700" width="1.500" height="1.500"/><rect x="1.200" y="3.600" width="1.500" height="1.500"/><rect x="1.200" y="6.500" width="1.500" height="1.500"/></g></svg>
<div class="f" style="left:767px;top:73.2px;width:68px;height:12.300px"></div>
<div class="f" style="left:846.8px;top:73.2px;width:67.4px;height:12.300px"></div>
<div class="f" style="left:926px;top:73.2px;width:67.8px;height:12.300px"></div>
<div class="f" style="left:767px;top:87.7px;width:68px;height:12.300px"></div>
<div class="f" style="left:846.8px;top:87.7px;width:67.4px;height:12.300px"></div>
<div class="f" style="left:926px;top:87.7px;width:67.8px;height:12.300px"></div>
<div class="f" style="left:767px;top:102.2px;width:68px;height:12.300px"></div>
<div class="f" style="left:846.8px;top:102.2px;width:67.4px;height:12.300px"></div>
<div class="f" style="left:926px;top:102.2px;width:67.8px;height:12.300px"></div>
<div class="hl" style="top:121px"></div>
<div class="a" style="left:582px;top:122px;width:418px;height:14px;background:#3e3e3e"></div>
<div class="fold" style="left:586px;top:126.600px"></div>
<svg class="a" style="left:595px;top:123px" width="14" height="12" viewBox="595 123 14 12"><g fill="#8c8c8c"><circle cx="599.700" cy="128" r="2.500"/><g stroke="#8c8c8c" stroke-width="1.100"><path d="M599.700 124.200V131.800M595.900 128H603.500M597 125.300L602.400 130.700M602.400 125.300L597 130.700"/></g></g><circle cx="599.700" cy="128" r="1.300" fill="#3e3e3e"/><path d="M598 133.400L604.600 125.400H606.100V127.900H607.200V131.100H605.900V133.400Z" fill="#d20a0a"/></svg>
<div class="cb" style="left:610.8px;top:124.4px"></div>
<svg class="a" style="left:610.8px;top:124.4px" width="10" height="10" viewBox="0 0 10 10"><path d="M2 5.500L3.900 7.200L7.800 3" stroke="#e4e4e4" stroke-width="1.200" fill="none"/></svg>
<svg class="a" style="left:968.6px;top:125px" width="8" height="8" viewBox="0 0 8 8"><circle cx="4" cy="4" r="3.500" fill="#c8c8c8"/><text x="4" y="6.300" font-size="6" font-weight="bold" text-anchor="middle" fill="#3e3e3e" font-family="Liberation Sans, sans-serif">?</text></svg>
<svg class="a" style="left:985.3px;top:124.5px" width="4" height="9" viewBox="0 0 4 9"><g fill="#c4c4c4"><rect x="1.200" y="0.700" width="1.500" height="1.500"/><rect x="1.200" y="3.600" width="1.500" height="1.500"/><rect x="1.200" y="6.500" width="1.500" height="1.500"/></g></svg>
<div class="a" style="left:758.300px;top:141px;width:235px;height:11px;background:#585858;border-radius:2px;box-shadow:inset 0 0 0 0.500px #303030"></div>
<div class="cb" style="left:758.6px;top:156px"></div>
<svg class="a" style="left:758.6px;top:156px" width="10" height="10" viewBox="0 0 10 10"><path d="M2 5.500L3.900 7.200L7.800 3" stroke="#e4e4e4" stroke-width="1.200" fill="none"/></svg>
<div class="cb" style="left:758.6px;top:170.4px"></div>
<div class="f" style="left:758.4px;top:183.64000000000001px;width:235.200px"></div>
<div class="f" style="left:758.4px;top:198.02000000000004px;width:218.200px;height:11.600px"></div>
<div class="a" style="left:963px;top:199.02000000000004px;width:12.800px;height:9.600px;background:#373737;border-radius:0 2px 2px 0"></div>
<svg class="a" style="left:761.3px;top:200.22000000000003px" width="7.6" height="7.6" viewBox="0 0 10 10"><g stroke-width="2" stroke-linecap="round" fill="none"><path d="M5 1.600V4.400" stroke="#a6e048"/><path d="M3.700 6.100L1.600 7.500" stroke="#4cc4f4"/><path d="M6.300 6.100L8.400 7.500" stroke="#f0602e"/></g></svg>
<svg class="a" style="left:965.400px;top:200.07000000000005px" width="8" height="8" viewBox="0 0 8 8"><circle cx="4" cy="4" r="3.200" fill="none" stroke="#c8c8c8" stroke-width="0.800"/><circle cx="4" cy="4" r="1.150" fill="#d0d0d0"/></svg>
<svg class="a" style="left:980.700px;top:199.57000000000005px" width="9" height="9" viewBox="0 0 9 9"><g transform="translate(4.500 4.500)"><g fill="#c8c8c8"><circle r="2.700"/><rect x="-0.950" y="-3.800" width="1.900" height="7.600"/><rect x="-0.950" y="-3.800" width="1.900" height="7.600" transform="rotate(60)"/><rect x="-0.950" y="-3.800" width="1.900" height="7.600" transform="rotate(120)"/></g><circle r="1.300" fill="#383838"/></g></svg>
<div class="f" style="left:758.4px;top:212.40000000000003px;width:218.200px;height:11.600px"></div>
<div class="a" style="left:963px;top:213.40000000000003px;width:12.800px;height:9.600px;background:#373737;border-radius:0 2px 2px 0"></div>
<svg class="a" style="left:761.3px;top:214.60000000000002px" width="7.6" height="7.6" viewBox="0 0 10 10"><g stroke-width="2" stroke-linecap="round" fill="none"><path d="M5 1.600V4.400" stroke="#a6e048"/><path d="M3.700 6.100L1.600 7.500" stroke="#4cc4f4"/><path d="M6.300 6.100L8.400 7.500" stroke="#f0602e"/></g></svg>
<svg class="a" style="left:965.400px;top:214.45000000000005px" width="8" height="8" viewBox="0 0 8 8"><circle cx="4" cy="4" r="3.200" fill="none" stroke="#c8c8c8" stroke-width="0.800"/><circle cx="4" cy="4" r="1.150" fill="#d0d0d0"/></svg>
<svg class="a" style="left:980.700px;top:213.95000000000005px" width="9" height="9" viewBox="0 0 9 9"><g transform="translate(4.500 4.500)"><g fill="#c8c8c8"><circle r="2.700"/><rect x="-0.950" y="-3.800" width="1.900" height="7.600"/><rect x="-0.950" y="-3.800" width="1.900" height="7.600" transform="rotate(60)"/><rect x="-0.950" y="-3.800" width="1.900" height="7.600" transform="rotate(120)"/></g><circle r="1.300" fill="#383838"/></g></svg>
<div class="dd" style="left:758.4px;top:226.98000000000002px;width:234.800px"></div>
<div class="tri" style="left:983.800px;top:231.18000000000004px;border-width:3.500px 3px 0"></div>
<div class="fold" style="left:586.800px;top:245px"></div>
<div class="f" style="left:758.4px;top:255.54000000000005px;width:174.800px"></div>
<div class="dd" style="left:935.200px;top:255.74000000000004px;width:58px"></div>
<div class="tri" style="left:984px;top:260.14000000000004px;border-width:3.500px 3px 0"></div>
<div class="f" style="left:758.4px;top:269.92px;width:235.200px"></div>
<div class="f" style="left:758.4px;top:284.3px;width:235.200px"></div>
<div class="dd" style="left:758.4px;top:298.88px;width:234.800px"></div>
<div class="tri" style="left:983.800px;top:303.08px;border-width:3.500px 3px 0"></div>
<div class="a" style="left:758px;top:318.66px;width:196px;height:1px;background:#5e5e5e"></div>
<div class="a" style="left:852.500px;top:315.56px;width:7.200px;height:7.200px;border-radius:50%;background:#999"></div>
<div class="f" style="left:958px;top:313.06px;width:35.600px"></div>
<div class="cb" style="left:758.6px;top:329.2px"></div>
<svg class="a" style="left:758.6px;top:329.2px" width="10" height="10" viewBox="0 0 10 10"><path d="M2 5.500L3.900 7.200L7.800 3" stroke="#e4e4e4" stroke-width="1.200" fill="none"/></svg>
<div class="fold" style="left:586.800px;top:345.52px"></div>
<div class="dd" style="left:758.4px;top:356.4px;width:234.800px"></div>
<div class="tri" style="left:983.800px;top:360.59999999999997px;border-width:3.500px 3px 0"></div>
<div class="cb" style="left:758.6px;top:371.6px"></div>
<div class="a" style="left:594.500px;top:385.300px;width:399px;height:20px;background:#3a3a3a;box-shadow:inset 0 0 0 1px #242424;border-radius:2px"></div>
<div class="a" style="left:595px;top:398.500px;width:398px;height:1px;background:#242424"></div>
<div class="a" style="left:996.500px;top:12px;width:3.500px;height:388px;background:#313131"></div>
<div class="a" style="left:997.500px;top:14px;width:2.500px;height:180px;background:#5c5c5c"></div>
<div class="t " style="left:19.50px;top:-0.19px;letter-spacing:-0.312px;">Scene</div>
<div class="t " style="left:75.50px;top:-0.19px;letter-spacing:-0.182px;">Asset Store</div>
<div class="t w" style="left:152.00px;top:-0.19px;letter-spacing:-0.508px;">Game</div>
<div class="t " style="left:5.00px;top:13.41px;letter-spacing:-0.200px;">Display 1</div>
<div class="t " style="left:63.00px;top:13.41px;letter-spacing:-0.037px;">QHD (2560x1440)</div>
<div class="t " style="left:179.50px;top:13.41px;letter-spacing:-0.097px;">Scale</div>
<div class="t " style="left:319.00px;top:13.41px;letter-spacing:0.103px;">0.63x</div>
<div class="t " style="left:375.00px;top:13.41px;letter-spacing:-0.164px;">Maximize On Play</div>
<div class="t " style="left:454.00px;top:13.41px;letter-spacing:0.003px;">Mute Audio</div>
<div class="t " style="left:507.00px;top:13.41px;letter-spacing:0.013px;">Stats</div>
<div class="t " style="left:534.30px;top:13.41px;letter-spacing:-0.240px;">Gizmos</div>
<div class="t " style="left:599.00px;top:-0.19px;letter-spacing:-0.044px;">Inspector</div>
<div class="t w" style="left:631.60px;top:19.41px;letter-spacing:-0.388px;font-size:9.6px">CM FreeLook1</div>
<div class="t " style="left:955.00px;top:19.21px;letter-spacing:-0.097px;">Static</div>
<div class="t " style="left:612.60px;top:36.41px;letter-spacing:0.062px;">Tag</div>
<div class="t w" style="left:633.60px;top:36.41px;letter-spacing:-0.057px;">Untagged</div>
<div class="t " style="left:808.00px;top:36.41px;letter-spacing:-0.197px;">Layer</div>
<div class="t w" style="left:836.80px;top:36.41px;letter-spacing:-0.018px;">Default</div>
<div class="t b" style="left:625.60px;top:56.81px;letter-spacing:-0.171px;">Transform</div>
<div class="t " style="left:595.60px;top:73.81px;letter-spacing:-0.111px;">Position</div>
<div class="t " style="left:759.60px;top:73.81px;">X</div>
<div class="t w" style="left:769.60px;top:73.81px;">5</div>
<div class="t " style="left:839.30px;top:73.81px;">Y</div>
<div class="t w" style="left:849.40px;top:73.81px;">2.3</div>
<div class="t " style="left:918.30px;top:73.81px;">Z</div>
<div class="t w" style="left:928.60px;top:73.81px;">-6.5</div>
<div class="t " style="left:595.60px;top:88.21px;letter-spacing:-0.104px;">Rotation</div>
<div class="t " style="left:759.60px;top:88.21px;">X</div>
<div class="t w" style="left:769.60px;top:88.21px;">0</div>
<div class="t " style="left:839.30px;top:88.21px;">Y</div>
<div class="t w" style="left:849.40px;top:88.21px;">0</div>
<div class="t " style="left:918.30px;top:88.21px;">Z</div>
<div class="t w" style="left:928.60px;top:88.21px;">0</div>
<div class="t " style="left:595.60px;top:102.61px;letter-spacing:-0.117px;">Scale</div>
<div class="t " style="left:759.60px;top:102.61px;">X</div>
<div class="t w" style="left:769.60px;top:102.61px;">1</div>
<div class="t " style="left:839.30px;top:102.61px;">Y</div>
<div class="t w" style="left:849.40px;top:102.61px;">1</div>
<div class="t " style="left:918.30px;top:102.61px;">Z</div>
<div class="t w" style="left:928.60px;top:102.61px;">1</div>
<div class="t b" style="left:625.00px;top:123.41px;letter-spacing:-0.324px;">CinemachineFreeLook</div>
<div class="t " style="left:596.00px;top:140.61px;letter-spacing:-0.051px;">Status: Live</div>
<div class="t w" style="left:866.90px;top:140.61px;letter-spacing:-0.123px;">Solo</div>
<div class="t " style="left:595.60px;top:154.99px;letter-spacing:-0.196px;">Game Window Guides</div>
<div class="t " style="left:595.60px;top:169.37px;letter-spacing:-0.124px;">Save During Play</div>
<div class="t " style="left:595.60px;top:183.75px;letter-spacing:-0.099px;">Priority</div>
<div class="t w" style="left:761.00px;top:183.75px;">10</div>
<div class="t " style="left:595.60px;top:198.13px;letter-spacing:-0.127px;">Follow</div>
<div class="t w" style="left:770.60px;top:198.13px;letter-spacing:-0.138px;">Root (Transform)</div>
<div class="t " style="left:595.60px;top:212.51px;letter-spacing:-0.037px;">Look At</div>
<div class="t w" style="left:770.60px;top:212.51px;letter-spacing:-0.160px;">Head (Transform)</div>
<div class="t " style="left:595.60px;top:226.89px;letter-spacing:-0.079px;">Standby Update</div>
<div class="t w" style="left:761.50px;top:226.89px;letter-spacing:-0.249px;">Round Robin</div>
<div class="t " style="left:595.60px;top:241.27px;letter-spacing:-0.134px;">Lens</div>
<div class="t " style="left:606.40px;top:255.65px;letter-spacing:-0.165px;">Vertical FOV</div>
<div class="t w" style="left:761.00px;top:255.65px;">50</div>
<div class="t " style="left:606.40px;top:270.03px;letter-spacing:-0.157px;">Near Clip Plane</div>
<div class="t w" style="left:761.00px;top:270.03px;">0.1</div>
<div class="t " style="left:606.40px;top:284.41px;letter-spacing:-0.187px;">Far Clip Plane</div>
<div class="t w" style="left:761.00px;top:284.41px;">5000</div>
<div class="t " style="left:606.40px;top:298.79px;letter-spacing:-0.120px;">Mode Override</div>
<div class="t w" style="left:761.50px;top:298.79px;">None</div>
<div class="t " style="left:606.40px;top:313.17px;letter-spacing:-0.083px;">Dutch</div>
<div class="t w" style="left:960.80px;top:313.17px;">0</div>
<div class="t " style="left:595.60px;top:327.55px;letter-spacing:-0.241px;">Common Lens</div>
<div class="t " style="left:595.60px;top:341.93px;letter-spacing:-0.054px;">Transitions</div>
<div class="t " style="left:606.40px;top:356.31px;letter-spacing:-0.129px;">Blend Hint</div>
<div class="t w" style="left:761.50px;top:356.31px;">None</div>
<div class="t " style="left:606.40px;top:370.69px;letter-spacing:-0.105px;">Inherit Position</div>
<div class="t " style="left:600.70px;top:386.01px;letter-spacing:-0.136px;">On Camera Live (ICinemachineCamera, ICinemachineCamera)</div>
</div>
</body></html>
